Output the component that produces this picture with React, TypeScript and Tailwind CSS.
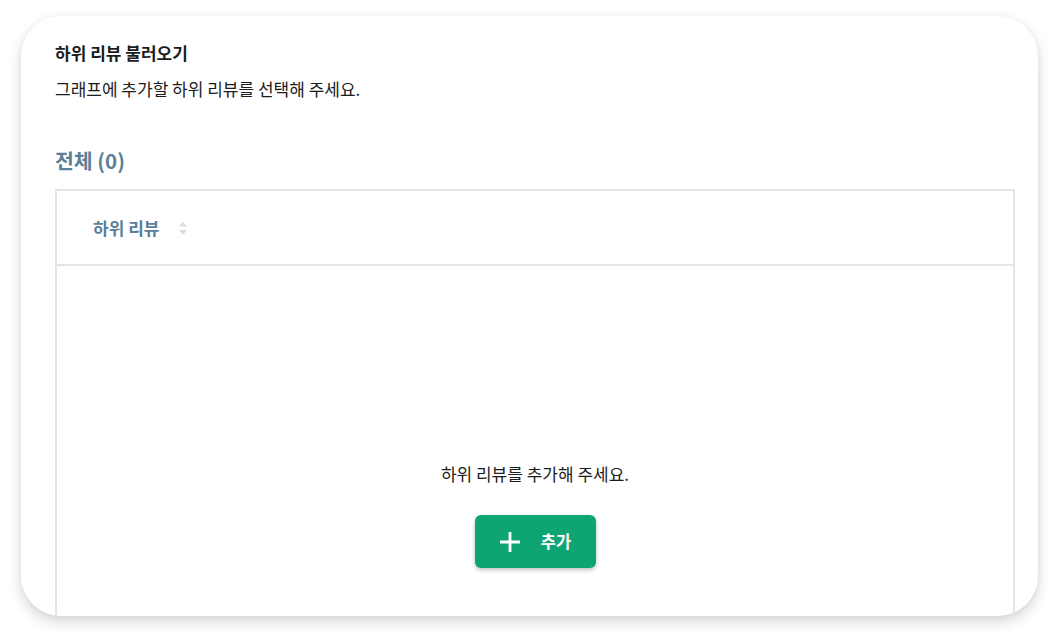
import React from "react";

export default function App() {
  return (
    <div
      className="w-[1059px] h-[644px] bg-white pl-[21px] pt-[16px]"
      style={{ fontFamily: '"Noto Sans CJK KR", "Noto Sans", sans-serif' }}
    >
      <div className="w-[1017px] h-[600px] bg-white rounded-[40px] overflow-hidden shadow-[0_6px_14px_rgba(0,0,0,0.16),0_0_6px_rgba(0,0,0,0.04)] pl-[34px] pr-[23px] pt-[24px] flex flex-col">
        <div className="text-[17px] leading-[26px] font-bold text-[#1c1c1c]">하위 리뷰 불러오기</div>
        <div className="mt-[10px] text-[17px] leading-[26px] text-[#1c1c1c]">그래프에 추가할 하위 리뷰를 선택해 주세요.</div>
        <div className="mt-[43px] text-[20.5px] leading-[30px] font-bold text-[#5b7e99]">전체 (0)</div>
        <div className="mt-[14px] flex-1 border-2 border-b-0 border-[#e2e4e7] flex flex-col">
          <div className="h-[75px] border-b-2 border-[#e2e4e7] flex items-center pl-[36px]">
            <span className="text-[17px] font-bold text-[#5b7e99]">하위 리뷰</span>
            <svg width="10" height="16" viewBox="0 0 10 16" className="ml-[19px]">
              <path d="M5 1.5 L9 6.5 L1 6.5 Z" fill="#dcdee1" />
              <path d="M5 15 L9 10 L1 10 Z" fill="#dcdee1" />
            </svg>
          </div>
          <div className="flex flex-col items-center pt-[195px]">
            <div className="text-[17px] leading-[26px] text-[#1c1c1c]">하위 리뷰를 추가해 주세요.</div>
            <button className="mt-[28px] w-[121px] h-[53px] rounded-[6px] bg-[#0fa573] shadow-[0_2px_4px_rgba(0,0,0,0.25)] flex items-center justify-center gap-[20px] text-white">
              <svg width="22" height="22" viewBox="0 0 22 22">
                <path d="M11 1 V21 M1 11 H21" stroke="white" strokeWidth="2.8" />
              </svg>
              <span className="text-[16.5px] font-bold">추가</span>
            </button>
          </div>
        </div>
      </div>
    </div>
  );
}
